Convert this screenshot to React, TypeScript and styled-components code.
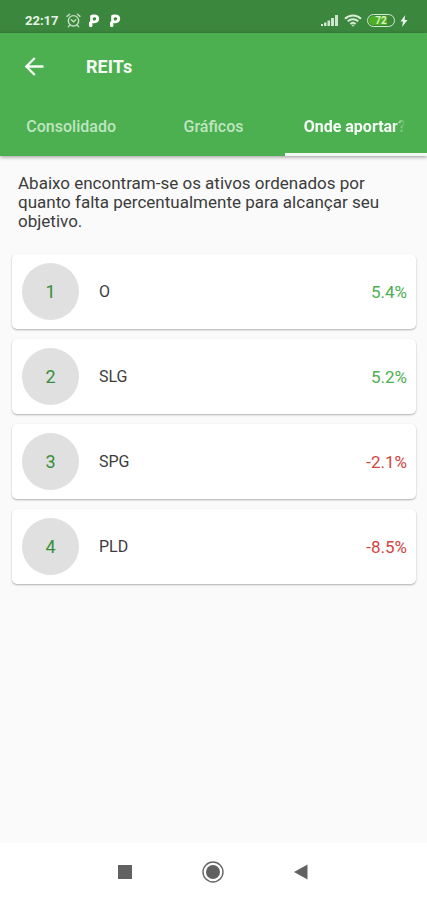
import React, { useState } from "react";
import styled, { createGlobalStyle } from "styled-components";

const GlobalStyle = createGlobalStyle`
  *, *::before, *::after { box-sizing: border-box; }
  body {
    margin: 0;
    background: #fafafa;
    font-family: Roboto, "Noto Sans", sans-serif;
    color: #3c3c3c;
  }
  button { font: inherit; border: 0; background: none; padding: 0; cursor: pointer; }
`;

const Screen = styled.div`
  display: flex;
  flex-direction: column;
  min-height: 100vh;
`;

const StatusBar = styled.div`
  display: flex;
  align-items: center;
  justify-content: space-between;
  height: 33px;
  padding: 8px 19px 0 25px;
  background: #3b873e;
  color: #e6f3e6;
`;

const StatusGroup = styled.div<{ $gap: number }>`
  display: flex;
  align-items: center;
  gap: ${(p) => p.$gap}px;

  svg { display: block; }
`;

const Clock = styled.span`
  font-size: 13px;
  line-height: 16px;
  font-weight: 700;
`;

const Battery = styled.span`
  display: flex;
  align-items: center;
  justify-content: center;
  width: 28px;
  height: 13px;
  border: 1px solid #d3e8d0;
  border-radius: 7px;
  background: linear-gradient(90deg, #4fae22 72%, #3b873e 72%);
  background-clip: content-box;
  padding: 1px;
  color: #d9f2c4;
  font-size: 10px;
  line-height: 10px;
  font-weight: 700;
`;

const Header = styled.header`
  position: relative;
  background: #4caf50;
  color: #f4fbf4;
  box-shadow: 0 1px 4px rgba(0, 0, 0, 0.4);
`;

const TitleRow = styled.div`
  display: flex;
  align-items: center;
  gap: 39px;
  height: 67px;
  padding: 0 22px;
`;

const BackButton = styled.button`
  display: flex;
  color: inherit;
`;

const Title = styled.h1`
  margin: 0;
  font-size: 18px;
  line-height: 24px;
  font-weight: 700;
`;

const TabList = styled.div`
  display: grid;
  grid-template-columns: repeat(3, minmax(0, 1fr));
`;

const Tab = styled.button<{ $active: boolean }>`
  display: flex;
  align-items: center;
  justify-content: ${(p) => (p.$active ? "flex-start" : "center")};
  height: 56px;
  padding: 0 19px;
  border-bottom: 3px solid ${(p) => (p.$active ? "#f4f8f4" : "transparent")};
  color: ${(p) => (p.$active ? "#f6fcf6" : "#bfe6c0")};
  font-size: 16px;
  line-height: 20px;
  font-weight: ${(p) => (p.$active ? 700 : 500)};
`;

const TabLabel = styled.span<{ $fade: boolean }>`
  overflow: hidden;
  white-space: nowrap;
  mask-image: ${(p) => (p.$fade ? "linear-gradient(90deg, #000 calc(100% - 12px), transparent calc(100% - 1px))" : "none")};
`;

const Main = styled.main`
  flex: 1;
  padding: 18px 11px 24px 12px;
`;

const Intro = styled.p`
  margin: 0 6px 23px;
  font-size: 17px;
  line-height: 19px;
`;

const AssetList = styled.ol`
  display: flex;
  flex-direction: column;
  gap: 10px;
  margin: 0;
  padding: 0;
  list-style: none;
`;

const AssetCard = styled.li`
  display: flex;
  align-items: center;
  gap: 20px;
  height: 75px;
  padding: 0 9px 0 10px;
  border-radius: 5px;
  background: #fff;
  box-shadow: 0 1px 2px rgba(0, 0, 0, 0.3);
`;

const Rank = styled.span`
  display: flex;
  align-items: center;
  justify-content: center;
  width: 57px;
  height: 57px;
  border-radius: 50%;
  background: #e0e0e0;
  color: #388e3c;
  font-size: 18px;
  line-height: 24px;
`;

const Ticker = styled.span`
  flex: 1;
  font-size: 16px;
  line-height: 20px;
`;

const Percent = styled.span<{ $negative: boolean }>`
  color: ${(p) => (p.$negative ? "#d1453f" : "#4caf50")};
  font-size: 17px;
  line-height: 20px;
`;

const SystemNav = styled.nav`
  display: flex;
  align-items: center;
  justify-content: center;
  gap: 64px;
  height: 57px;
  padding-right: 2px;
  background: #fff;
`;

const NavButton = styled.button`
  display: flex;
  align-items: center;
  justify-content: center;
  width: 24px;
  height: 24px;
`;

const AlarmIcon = () => (
  <svg width="15" height="15" viewBox="0 0 15 15" fill="none" stroke="#c4e0c2" strokeWidth="1.4" strokeLinecap="round" aria-hidden="true">
    <circle cx="7.5" cy="7.8" r="5.2" />
    <path d="M1 3.4 3.6 1.2M14 3.4 11.4 1.2M3.6 12.2 2.4 13.8M11.4 12.2l1.2 1.6M5.2 6.8l2.3 2 2.3-2" />
  </svg>
);

const ParkingIcon = () => (
  <svg width="12" height="14" viewBox="0 0 12 14" aria-hidden="true">
    <path
      fill="#fff"
      fillRule="evenodd"
      d="M2.200 1.500C3.200.8 4.600.6 6.200.6c3 0 5 1.500 5 4.200S9.200 9.200 6.500 9.200c-.8 0-1.500-.1-2.100-.3v2.600c0 1-.6 1.500-1.600 1.500S1 12.500 1 11.500V8.200l1.200-1zM6.600 3.300c-1.100 0-1.800.7-1.800 1.900 0 .9.500 1.400 1.400 1.400 1.200 0 1.900-.7 1.900-1.800 0-1-.6-1.500-1.500-1.500z"
    />
  </svg>
);

const SignalIcon = () => (
  <svg width="18" height="13" viewBox="0 0 18 13" fill="#cfe5cd" aria-hidden="true">
    <path d="M0 10h2v2H0zM3 8.500h2.500V12H3zM6.500 6.500H9V12H6.500zM10 4h3v8h-3zM14 1h3v11h-3z" />
  </svg>
);

const WifiIcon = () => (
  <svg width="18" height="13" viewBox="0 0 18 13" fill="none" stroke="#d8ebd6" strokeWidth="2" aria-hidden="true">
    <path d="M1 4.800C5.500.4 12.500.4 17 4.800M3.700 7.400c3-2.900 7.600-2.900 10.600 0M6.400 9.900c1.500-1.400 3.700-1.400 5.200 0" />
    <path d="M7.500 10.800h3L9 12.700z" fill="#d8ebd6" stroke="none" />
  </svg>
);

const BoltIcon = () => (
  <svg width="8" height="12" viewBox="0 0 8 12" fill="#eef7ee" aria-hidden="true">
    <path d="M5.200 0 .5 6.400h2.600L2 12l5.500-7H4.600z" />
  </svg>
);

const BackArrowIcon = () => (
  <svg width="25" height="25" viewBox="0 0 25 25" fill="none" stroke="currentColor" strokeWidth="2.300" aria-hidden="true">
    <path d="M21.500 12.500H4.500M12.800 4 4.300 12.500l8.500 8.500" />
  </svg>
);

const RecentsIcon = () => (
  <svg width="14" height="14" viewBox="0 0 14 14" aria-hidden="true">
    <rect width="14" height="14" fill="#616161" />
  </svg>
);

const HomeIcon = () => (
  <svg width="22" height="22" viewBox="0 0 22 22" aria-hidden="true">
    <circle cx="11" cy="11" r="10" fill="none" stroke="#666" strokeWidth="1.400" />
    <circle cx="11" cy="11" r="7" fill="#616161" />
  </svg>
);

const NavBackIcon = () => (
  <svg width="14" height="16" viewBox="0 0 14 16" aria-hidden="true">
    <path d="M0 8 13.500.5v15z" fill="#616161" />
  </svg>
);

const tabs = ["Consolidado", "Gráficos", "Onde aportar?"];

const assets = [
  { ticker: "O", gap: 5.4 },
  { ticker: "SLG", gap: 5.2 },
  { ticker: "SPG", gap: -2.1 },
  { ticker: "PLD", gap: -8.5 },
];

export default function App() {
  const [active, setActive] = useState(2);

  return (
    <>
      <GlobalStyle />
      <Screen>
        <StatusBar>
          <StatusGroup $gap={7}>
            <Clock>22:17</Clock>
            <AlarmIcon />
            <StatusGroup $gap={9}>
              <ParkingIcon />
              <ParkingIcon />
            </StatusGroup>
          </StatusGroup>
          <StatusGroup $gap={5}>
            <SignalIcon />
            <WifiIcon />
            <Battery>72</Battery>
            <BoltIcon />
          </StatusGroup>
        </StatusBar>
        <Header>
          <TitleRow>
            <BackButton aria-label="Voltar">
              <BackArrowIcon />
            </BackButton>
            <Title>REITs</Title>
          </TitleRow>
          <TabList role="tablist">
            {tabs.map((label, i) => (
              <Tab key={label} role="tab" aria-selected={i === active} $active={i === active} onClick={() => setActive(i)}>
                <TabLabel $fade={i === 2}>{label}</TabLabel>
              </Tab>
            ))}
          </TabList>
        </Header>
        <Main>
          <Intro>
            Abaixo encontram-se os ativos ordenados por quanto falta percentualmente para alcançar seu objetivo.
          </Intro>
          <AssetList>
            {assets.map((asset, i) => (
              <AssetCard key={asset.ticker}>
                <Rank>{i + 1}</Rank>
                <Ticker>{asset.ticker}</Ticker>
                <Percent $negative={asset.gap < 0}>{asset.gap.toFixed(1)}%</Percent>
              </AssetCard>
            ))}
          </AssetList>
        </Main>
        <SystemNav aria-label="Sistema">
          <NavButton aria-label="Recentes">
            <RecentsIcon />
          </NavButton>
          <NavButton aria-label="Início">
            <HomeIcon />
          </NavButton>
          <NavButton aria-label="Retornar">
            <NavBackIcon />
          </NavButton>
        </SystemNav>
      </Screen>
    </>
  );
}
